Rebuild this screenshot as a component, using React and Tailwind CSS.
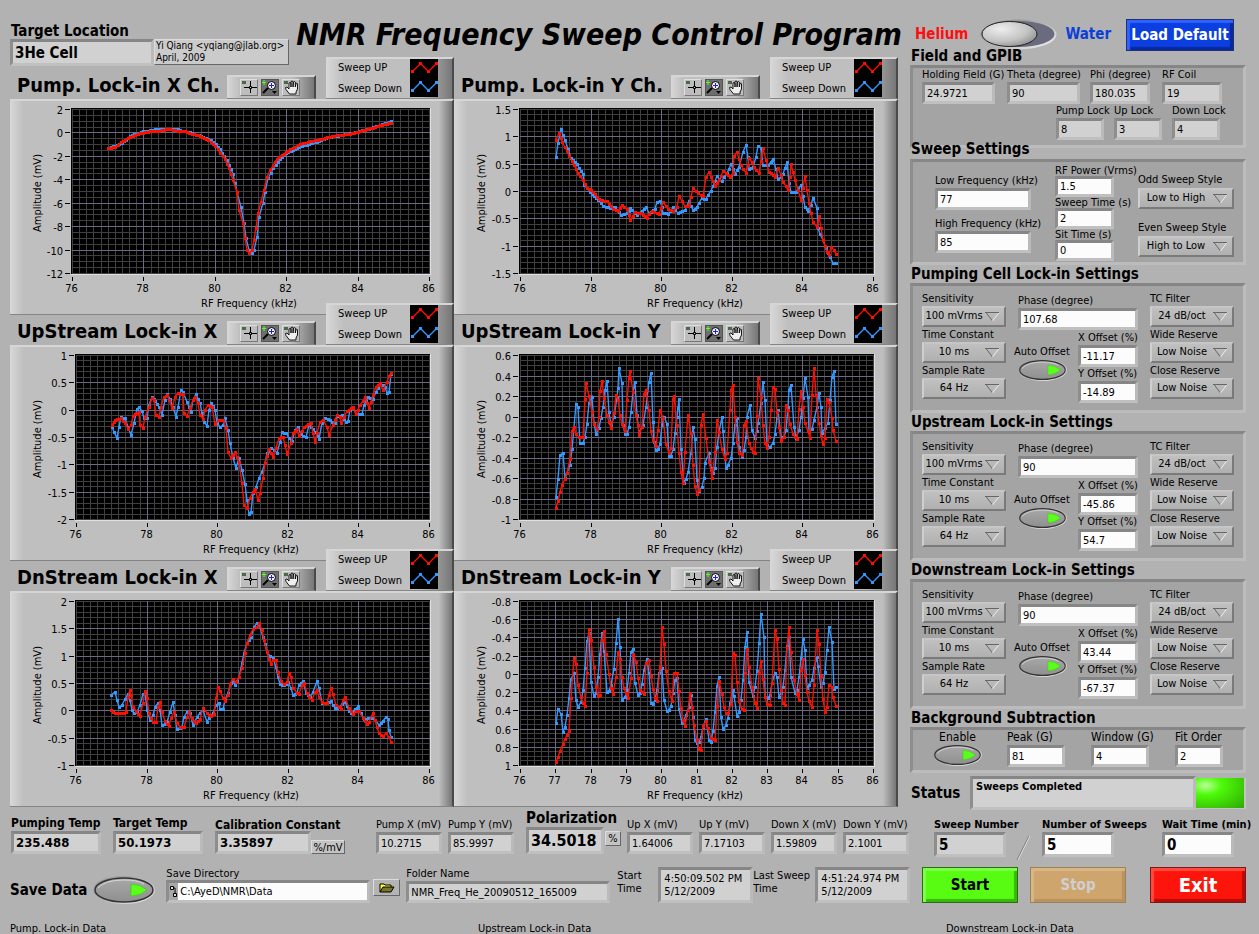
import React from "react";

// Sweep traces, stored as "x,y" vertices on the 3x capture grid of each graph
const TRACES = {
  pumpX: {
    up: "325,414 345,411 362,397 390,380 420,369 450,364 478,362 505,357 530,362 555,363 575,371 600,378 625,391 645,408 660,428 675,447 688,475 700,510 710,545 718,600 728,640 735,685 742,720 748,730 755,720 762,690 768,655 775,610 783,575 792,540 800,500 810,480 825,455 845,435 870,418 900,402 945,390 975,384 1010,376 1050,371 1075,365 1110,355 1140,346 1174,338",
    down: "325,414 365,399 390,378 430,364 480,356 525,356 570,367 610,380 640,395 660,418 680,450 700,492 712,545 722,590 732,640 738,685 747,720 755,730 762,720 770,680 778,620 788,580 795,545 805,505 820,475 840,446 865,425 905,408 950,395 985,382 1050,370 1100,358 1140,345 1174,333",
  },
  pumpY: {
    up: "317,391 326,370 337,397 350,424 365,452 378,478 398,509 412,534 430,545 448,568 470,574 490,597 505,604 516,586 530,598 541,631 556,606 572,610 590,623 605,602 628,612 640,577 655,596 670,604 680,590 688,557 704,588 718,586 730,533 745,550 760,558 767,500 776,487 794,527 808,510 820,484 840,500 850,490 852,437 860,427 872,464 887,488 898,443 912,470 926,490 940,415 956,485 974,500 984,475 1000,515 1013,540 1024,463 1036,510 1052,571 1066,499 1078,580 1090,637 1100,650 1106,617 1120,690 1132,727 1138,735 1144,710 1157,731",
    down: "317,442 332,358 345,390 362,445 380,463 398,493 403,525 420,545 445,570 460,588 480,594 496,590 514,616 530,610 541,593 560,616 576,603 588,592 598,608 616,598 622,577 629,574 640,608 655,611 668,592 684,608 704,600 716,574 728,600 740,592 755,565 767,566 782,543 800,499 815,512 830,490 842,463 855,492 868,470 878,425 887,406 898,476 910,470 925,409 934,415 940,465 955,465 968,448 985,507 1000,492 1012,455 1018,520 1024,545 1038,547 1052,526 1064,590 1075,602 1090,565 1100,595 1104,655 1118,690 1128,715 1140,740 1148,758 1157,758",
  },
  upX: {
    up: "335,344 346,329 364,325 376,338 383,358 392,345 400,317 418,305 421,345 428,355 436,320 446,290 456,265 462,270 468,315 476,322 484,290 492,260 500,256 508,270 516,293 526,262 534,250 548,253 552,310 560,319 570,293 578,270 586,262 594,280 600,315 608,326 616,300 624,286 636,290 646,343 656,330 668,330 678,355 685,425 692,443 706,425 718,455 726,520 733,585 740,593 750,565 758,545 766,537 773,570 780,548 788,505 794,460 806,418 818,442 828,415 838,383 850,380 862,432 872,398 880,370 892,358 898,378 912,350 932,340 944,395 952,370 960,335 970,330 980,350 988,375 998,345 1010,315 1020,322 1024,340 1040,302 1058,292 1068,313 1080,285 1096,262 1108,295 1120,255 1128,230 1140,220 1150,240 1160,215 1168,198 1174,188",
    down: "335,352 343,367 350,383 357,350 364,320 376,325 385,350 394,374 402,340 410,297 416,292 426,303 432,325 442,323 448,285 455,262 466,273 478,290 486,314 494,270 500,251 510,268 518,292 527,320 535,290 542,239 550,245 560,275 572,305 580,270 587,253 600,280 612,335 620,349 627,300 634,278 645,300 652,340 660,350 670,345 674,325 684,360 690,400 700,445 708,473 716,445 726,480 734,523 740,570 747,611 752,605 758,550 768,530 778,505 786,485 796,460 800,430 812,415 822,420 832,430 840,395 846,367 858,370 866,385 877,392 884,360 893,352 902,372 918,382 928,345 940,357 958,386 966,340 976,325 990,329 1004,340 1010,318 1025,316 1038,337 1044,333 1050,300 1060,290 1068,312 1085,313 1092,285 1104,262 1118,267 1128,245 1140,220 1155,230 1162,250 1168,247 1172,193 1174,190",
  },
  upY: {
    up: "317,595 325,572 331,545 337,524 344,508 352,490 359,447 365,364 371,352 378,372 386,382 398,382 404,268 409,220 416,258 425,307 431,341 440,358 446,320 449,244 457,212 463,265 471,315 482,355 491,310 497,254 503,270 509,315 516,343 526,362 532,270 536,204 541,182 549,246 557,315 568,376 577,350 583,252 588,239 596,300 602,362 610,390 618,408 624,360 629,299 638,325 648,402 656,430 663,415 668,268 673,257 682,345 688,428 694,485 700,520 706,427 715,314 722,370 728,466 734,527 742,553 748,540 754,346 760,313 768,385 776,455 787,503 794,425 800,331 808,365 816,418 824,448 832,428 840,300 843,241 848,226 855,320 860,395 866,430 876,434 882,345 888,334 896,400 908,425 914,430 920,318 925,203 932,260 938,345 946,400 952,415 958,382 964,300 968,232 974,236 980,307 992,394 1002,380 1008,284 1014,300 1020,341 1028,372 1040,388 1046,298 1052,242 1060,290 1066,340 1079,385 1086,255 1091,173 1098,255 1106,340 1112,377 1118,401 1124,385 1132,268 1138,275 1145,325 1150,361 1157,394",
    down: "317,562 325,506 331,436 338,428 344,505 352,490 360,465 366,418 371,350 377,283 384,290 390,400 398,400 404,380 410,343 418,280 425,260 431,340 437,373 446,355 453,325 459,292 464,240 470,212 476,305 484,345 492,320 500,260 504,235 508,173 515,220 519,345 524,373 530,371 536,350 542,307 550,245 556,217 562,315 568,370 578,345 588,290 596,217 602,190 608,335 612,395 618,421 624,418 630,402 636,345 642,322 650,343 656,438 662,438 668,418 674,370 680,320 684,295 688,268 694,418 702,520 708,508 715,485 722,430 728,352 734,388 740,510 748,543 756,530 761,505 766,460 776,430 782,475 788,490 796,475 802,410 808,365 815,320 820,362 827,475 834,465 842,445 848,400 854,345 860,325 867,410 875,440 882,420 888,380 892,320 899,286 906,360 914,385 925,340 932,280 940,217 946,270 952,405 960,410 968,398 974,372 980,325 985,300 992,380 1002,380 1008,360 1014,290 1018,240 1024,226 1032,350 1038,385 1046,360 1054,320 1060,265 1066,205 1074,262 1078,365 1086,358 1092,330 1100,290 1106,248 1112,290 1116,370 1126,355 1134,340 1140,270 1145,202 1151,182 1157,341",
  },
  dnX: {
    up: "334,480 345,490 365,490 378,486 384,440 389,419 394,436 400,470 408,484 421,498 428,460 434,424 442,445 448,490 460,516 467,516 474,470 480,457 486,485 494,512 508,529 514,505 521,487 530,520 540,530 553,531 560,500 568,485 576,505 588,518 600,508 610,473 620,490 632,497 642,492 648,445 653,412 660,423 668,445 675,452 684,435 690,402 700,388 708,395 718,380 726,355 734,310 740,278 750,255 760,236 770,230 778,220 785,240 792,270 800,305 806,328 812,343 820,330 828,330 834,365 844,392 852,403 860,395 866,368 873,380 880,415 890,430 898,433 906,405 912,400 920,430 928,440 937,449 944,425 950,420 958,440 966,455 980,460 988,435 992,415 1000,432 1008,465 1024,478 1030,450 1036,440 1046,475 1058,492 1068,482 1078,482 1088,505 1100,522 1108,515 1118,490 1124,510 1130,530 1138,550 1150,557 1157,550 1166,562 1174,577",
    down: "334,436 344,427 352,450 358,472 366,465 376,448 384,432 390,450 396,480 402,490 410,485 420,465 428,432 436,430 442,480 450,510 460,495 466,470 474,460 480,480 487,526 500,515 510,485 520,455 526,495 532,538 545,530 553,500 560,487 570,490 580,526 590,500 600,490 610,480 620,515 628,505 640,490 648,465 656,460 660,478 668,478 676,450 684,430 692,400 698,390 706,406 718,380 726,340 740,280 752,262 762,230 770,220 778,222 788,260 794,282 802,305 810,318 820,323 828,350 834,380 840,403 852,406 864,395 872,415 878,436 890,428 898,405 910,392 918,430 930,440 940,425 950,394 958,415 965,460 980,458 992,452 1004,475 1020,470 1034,455 1046,482 1052,490 1064,478 1075,467 1084,490 1092,506 1104,505 1116,505 1126,510 1136,526 1150,512 1157,500 1163,506 1168,540 1174,562",
  },
  dnY: {
    up: "317,637 325,622 331,602 338,583 345,567 358,544 364,445 371,323 377,343 383,404 392,440 398,460 404,469 410,368 416,236 424,271 431,352 437,410 443,438 449,436 457,271 463,242 469,312 476,373 482,415 490,433 497,380 503,305 509,328 515,380 523,415 535,445 542,385 550,312 557,335 563,385 569,420 582,433 588,338 596,329 602,377 608,418 616,445 622,454 629,350 635,230 641,281 649,362 656,422 666,454 673,370 682,368 688,422 694,473 700,510 706,528 714,480 721,428 727,470 733,526 742,570 748,598 754,601 760,527 767,512 774,535 782,565 794,569 800,468 808,394 815,432 822,470 828,488 834,490 842,462 848,308 854,314 860,395 866,453 875,478 881,481 886,370 892,296 898,352 906,410 914,458 920,475 926,370 932,332 940,388 946,442 952,463 959,466 966,400 974,239 980,266 986,358 992,420 1000,458 1006,466 1012,295 1018,230 1024,305 1032,390 1040,432 1046,451 1052,360 1058,326 1066,375 1072,425 1078,452 1085,472 1091,406 1100,239 1106,282 1112,377 1118,448 1124,485 1132,472 1138,406 1146,410 1150,440 1157,469",
    down: "317,520 325,476 332,493 338,547 344,530 350,496 358,445 364,386 371,370 377,451 383,472 392,455 398,420 404,355 410,274 416,250 424,395 431,439 437,430 443,380 449,311 457,248 463,302 470,427 477,424 484,405 491,358 497,278 503,208 509,290 515,449 524,442 530,420 536,370 542,307 550,296 556,400 563,436 570,430 576,402 583,360 590,326 596,370 602,460 608,463 616,450 622,420 628,370 635,355 641,449 650,484 656,480 662,468 668,430 674,390 681,383 688,478 695,520 702,510 708,495 716,470 722,435 728,500 734,571 742,580 748,575 754,560 760,530 767,508 776,569 782,577 788,542 794,485 800,409 808,382 814,500 820,538 828,525 834,505 840,460 848,420 853,437 860,499 866,487 874,450 880,390 886,292 892,247 898,395 908,439 914,412 920,362 926,278 932,193 941,262 946,440 954,445 960,435 966,400 974,370 980,382 986,442 994,430 1000,410 1006,360 1012,287 1018,260 1024,382 1034,430 1040,420 1046,380 1052,325 1058,266 1066,300 1072,415 1078,405 1085,390 1091,355 1100,320 1105,347 1112,412 1118,400 1124,365 1132,301 1138,230 1145,277 1151,417 1157,412",
  },
};

const EVEN = ["76", "78", "80", "82", "84", "86"];
const ALL = ["76", "77", "78", "79", "80", "81", "82", "83", "84", "85", "86"];

const CHARTS = [
  { id: "pumpX", title: "Pump. Lock-in X Ch.", origin: [30, 267], left: 62, xs: EVEN, xMinor: 10, yMinor: 4, ys: ["2", "0", "-2", "-4", "-6", "-8", "-10", "-12"] },
  { id: "pumpY", title: "Pump. Lock-in Y Ch.", origin: [12, 267], left: 66, xs: EVEN, xMinor: 10, yMinor: 5, ys: ["1.5", "1", "0.5", "0", "-0.5", "-1", "-1.5"] },
  { id: "upX", title: "UpStream Lock-in X", origin: [30, 105], left: 66, xs: EVEN, xMinor: 10, yMinor: 5, ys: ["1", "0.5", "0", "-0.5", "-1", "-1.5", "-2"] },
  { id: "upY", title: "UpStream Lock-in Y", origin: [12, 105], left: 66, xs: EVEN, xMinor: 10, yMinor: 4, ys: ["0.6", "0.4", "0.2", "0", "-0.2", "-0.4", "-0.6", "-0.8", "-1"] },
  { id: "dnX", title: "DnStream Lock-in X", origin: [30, 123], left: 66, xs: EVEN, xMinor: 10, yMinor: 5, ys: ["2", "1.5", "1", "0.5", "0", "-0.5", "-1"] },
  { id: "dnY", title: "DnStream Lock-in Y", origin: [12, 123], left: 66, xs: ALL, xMinor: 5, yMinor: 4, ys: ["-0.8", "-0.6", "-0.4", "-0.2", "0", "0.2", "0.4", "0.6", "0.8", "1"] },
];

const RIGHT = 420;
const TOP = 10;
const BOTTOM = 175;
const RED = "#ff0f00";
const BLUE = "#3399ff";

// turns the vertices into evenly spaced samples, one marker each
const toPoints = (trace, [ox, oy]) => {
  const v = trace.split(" ").map((p) => p.split(",").map(Number));
  const out = [];
  v.forEach(([x, y], i) => {
    if (i > 0) {
      const [px, py] = v[i - 1];
      const n = Math.max(1, Math.round((x - px) / 7));
      for (let k = 1; k < n; k++) out.push([px + ((x - px) * k) / n, py + ((y - py) * k) / n]);
    }
    out.push([x, y]);
  });
  return out.map(([x, y]) => [Math.round((x - ox) / 3), Math.round((y - oy) / 3)]);
};

const Trace = ({ trace, origin, color }) => {
  const pts = toPoints(trace, origin);
  return (
    <g>
      <polyline points={pts.map((p) => p.join(",")).join(" ")} fill="none" stroke={color} strokeWidth="1.4" />
      {pts.map(([x, y], i) => (
        <rect key={i} x={x - 1} y={y - 1} width="3" height="3" fill={color} shapeRendering="crispEdges" />
      ))}
    </g>
  );
};

const lines = (count, from, to) =>
  Array.from({ length: count + 1 }, (_, i) => Math.round(from + ((to - from) * i) / count) + 0.5);

const Plot = ({ id, origin, left, xs, ys, xMinor, yMinor }) => {
  const xMajor = lines(xs.length - 1, left, RIGHT - 1);
  const yMajor = lines(ys.length - 1, TOP, BOTTOM - 1);
  return (
    <svg viewBox="0 0 444 216" className="block w-full text-[11px]" role="img" aria-label="Amplitude against RF frequency">
      <rect x={left - 1} y={TOP - 1} width={RIGHT - left + 2} height={BOTTOM - TOP + 2} fill="#e0e0e0" />
      <rect x={left - 1} y={TOP - 1} width={RIGHT - left + 1} height={BOTTOM - TOP + 1} fill="#000" />
      <g stroke="#404040">
        {lines((xs.length - 1) * xMinor, left, RIGHT - 1).map((x) => (
          <path key={x} d={`M${x} ${TOP}V${BOTTOM}`} />
        ))}
        {lines((ys.length - 1) * yMinor, TOP, BOTTOM - 1).map((y) => (
          <path key={y} d={`M${left} ${y}H${RIGHT}`} />
        ))}
      </g>
      <g stroke="#6a6a84">
        {xMajor.slice(1, -1).map((x) => <path key={x} d={`M${x} ${TOP}V${BOTTOM}`} />)}
        {yMajor.slice(1, -1).map((y) => <path key={y} d={`M${left} ${y}H${RIGHT}`} />)}
      </g>
      <g stroke="#000">
        {xMajor.map((x) => <path key={x} d={`M${x} 178v4`} />)}
        {yMajor.map((y) => <path key={y} d={`M${left - 7} ${y}h5`} />)}
      </g>
      <g textAnchor="middle">
        {xs.map((t, i) => <text key={t} x={xMajor[i] - 1} y="193">{t}</text>)}
        <text x={(left + RIGHT) / 2 - 2} y="208">RF Frequency (kHz)</text>
        <text transform="translate(31 94) rotate(-90)">Amplitude (mV)</text>
      </g>
      <g textAnchor="end">
        {ys.map((t, i) => <text key={t} x={left - 9} y={yMajor[i] + 4}>{t}</text>)}
      </g>
      <Trace trace={TRACES[id].down} origin={origin} color={BLUE} />
      <Trace trace={TRACES[id].up} origin={origin} color={RED} />
    </svg>
  );
};

const LegendMark = ({ color }) => (
  <svg width="28" height="19" viewBox="0 0 28 19" className="block bg-black" fill={color}>
    <path d="M2.5 12.5l8-8 8 8 8-8" fill="none" stroke={color} strokeWidth="1.3" />
    <path d="M1 11h3v3H1zM9 3h3v3H9zM17 11h3v3h-3zM25 3h3v3h-3z" />
  </svg>
);

const ToolButton = ({ label, active, children }) => (
  <button
    type="button"
    aria-label={label}
    className={
      active
        ? "h-[17px] w-[18px] border border-[#555] bg-[#6e6e6e]"
        : "h-[17px] w-[18px] border border-t-[#e0e0e0] border-l-[#e0e0e0] border-r-[#777] border-b-[#777] bg-[#bdbdbd]"
    }
  >
    <svg width="16" height="15" viewBox="0 0 16 15" className="block" fill="none" stroke="#000">
      {children}
    </svg>
  </button>
);

const EDGE = "border-t-2 border-r-2 border-b border-t-[#d6d6d6] border-r-[#4a4a4a] border-b-[#858585]";
const PALETTE = `${EDGE} bg-[linear-gradient(90deg,#d8d8d8,#bfbfbf_14%,#bfbfbf_74%,#777777)]`;

const Chart = ({ title, ...plot }) => (
  <figure className="-mt-3">
    <figcaption className="flex h-[42px] items-end">
      <h2 className="flex-1 pl-[7px] text-[20px] leading-[28px] font-bold whitespace-nowrap">{title}</h2>
      <div className={`mr-[10px] flex h-6 w-[89px] gap-[3px] pt-[2px] pl-[13px] ${PALETTE}`}>
        <ToolButton label="Cursor">
          <path d="M9.5 1v12M3 7.5h13" />
          <path d="M8.5 6.500h2v2h-2z" fill="#bdbdbd" />
          <path d="M1 1h4v3H1z" fill="#4a6a4a" stroke="none" />
        </ToolButton>
        <ToolButton label="Zoom" active>
          <path d="M1 13l5-5" strokeWidth="2" />
          <circle cx="9.5" cy="5.5" r="4" fill="#eeeeff" />
          <path d="M7 5.5h5M9.5 3v5" stroke="#2222cc" />
          <path d="M2 0v5M0 2.5h4" stroke="#55ff22" />
          <path d="M10 11h5l-2.5 3z" fill="#000" stroke="none" />
        </ToolButton>
        <ToolButton label="Pan">
          <path d="M1 1h4v3H1z" fill="#4a6a4a" stroke="none" />
          <path
            d="M6.5 14L3 9.5 2.5 7.5 4 7l2 2V3l1-.5L8 3v4V1.5L9 1l1 .5V7l.5-5 1-.5.8.5v5l.7-3.5.8-.3.7.5V9l-1.5 3v2z"
            fill="#eee"
            strokeWidth=".9"
          />
        </ToolButton>
      </div>
      <div className={`flex h-[42px] w-[128px] justify-between pr-[14px] pl-3 ${PALETTE}`}>
        <div className="-mt-[2px] text-[11px] leading-[21px]">
          <p>Sweep UP</p>
          <p>Sweep Down</p>
        </div>
        <div className="h-[38px] bg-black">
          <LegendMark color={RED} />
          <LegendMark color={BLUE} />
        </div>
      </div>
    </figcaption>
    <div className={`bg-[linear-gradient(90deg,#d8d8d8,#bfbfbf_3%,#bfbfbf_97%,#777777)] ${EDGE}`}>
      <div className="-mt-[2px] -mr-[2px] -mb-px">
        <Plot {...plot} />
      </div>
    </div>
  </figure>
);

const SUNKEN = "border-[3px] border-t-[#868686] border-l-[#8e8e8e] border-r-[#bababa] border-b-[#c0c0c0]";
const RAISED = "border border-t-[#dddddd] border-l-[#dddddd] border-r-[#666666] border-b-[#666666]";

const Field = ({ label, value, className, edit, labelClass = "text-[11px] leading-[14px]", inputClass = "h-[22px] text-[11px]" }) => (
  <label className={`block shrink-0 ${className}`}>
    <span className={`block whitespace-nowrap ${labelClass}`}>{label}</span>
    <input
      defaultValue={value}
      readOnly={!edit}
      className={`block w-full pl-[2px] outline-none ${SUNKEN} ${inputClass} ${edit ? "bg-[#fcfcfc]" : "bg-[#d1d1d1]"}`}
    />
  </label>
);

const Select = ({ label, value, labelClass = "leading-[15px]" }) => (
  <label className="relative block text-[11px]">
    <span className={`block whitespace-nowrap ${labelClass}`}>{label}</span>
    <select
      defaultValue={value}
      className="block h-[21px] w-full appearance-none border-2 border-t-[#c6c6c6] border-l-[#cfcfcf] border-r-[#7a7a7a] border-b-[#7a7a7a] bg-linear-to-b from-[#c0c0c0] to-[#b0b0b0] pr-[20px] text-center [text-align-last:center] outline-none"
    >
      <option>{value}</option>
    </select>
    <svg width="15" height="10" viewBox="0 0 15 10" className="absolute right-[6px] bottom-[5px]" fill="none">
      <path d="M1 .5L7.5 9" stroke="#666" />
      <path d="M14 .5L7.5 9" stroke="#eee" />
      <path d="M0 .5H14" stroke="#666" />
    </svg>
  </label>
);

const OvalSwitch = ({ className }) => (
  <button type="button" aria-pressed="true" className={`block ${className}`}>
    <svg viewBox="0 0 62 28" className="block h-full w-full">
      <defs>
        <linearGradient id="ovalFace" x1="0" y1="0" x2="0" y2="1">
          <stop offset="0" stopColor="#a8a8a8" />
          <stop offset="1" stopColor="#8f8f8f" />
        </linearGradient>
        <linearGradient id="ovalRim" x1="0" y1="0" x2="1" y2="1">
          <stop offset="0" stopColor="#8a8a8a" />
          <stop offset=".5" stopColor="#b8b8b8" />
          <stop offset="1" stopColor="#f2f2f2" />
        </linearGradient>
      </defs>
      <ellipse cx="31" cy="14" rx="31" ry="14" fill="url(#ovalRim)" />
      <ellipse cx="31" cy="14" rx="29" ry="12" fill="url(#ovalFace)" stroke="#333" strokeWidth="1.5" />
      <path d="M5 12Q12 4 31 4q14 0 20 4" fill="none" stroke="#d8d8d8" />
      <path d="M38 8q9 0 16 6-7 6-16 6z" fill="#5bff1c" stroke="#43c512" strokeWidth=".7" />
    </svg>
  </button>
);

const Panel = ({ title, titleClass = "", className, children }) => (
  <section>
    <h3 className={`pl-px text-[15px] leading-[18px] font-bold whitespace-nowrap ${titleClass}`}>{title}</h3>
    <div className={`mr-[13px] border-[3px] border-t-[#868686] border-l-[#8e8e8e] border-r-[#bcbcbc] border-b-[#bcbcbc] bg-[#a4a4a4] ${className}`}>
      {children}
    </div>
  </section>
);

const LockIn = ({ title, phase, x, y }) => (
  <Panel title={title} className="flex h-[130px] pl-[9px]">
    <div className="w-[84px] pt-[5px]">
      <Select label="Sensitivity" value="100 mVrms" />
      <Select label="Time Constant" value="10 ms" />
      <Select label="Sample Rate" value="64 Hz" />
    </div>
    <div className="ml-2 w-[124px] pt-2">
      <Field label="Phase (degree)" value={phase} edit className="ml-1" />
      <div className="flex justify-between pt-px">
        <label className="block pt-[14px] text-[11px] leading-[14px] whitespace-nowrap">
          Auto Offset
          <OvalSwitch className="ml-[3px] h-[22px] w-[51px]" />
        </label>
        <div className="w-[60px]">
          <Field label="X Offset (%)" value={x} edit className="" />
          <Field label="Y Offset (%)" value={y} edit className="" />
        </div>
      </div>
    </div>
    <div className="ml-3 w-[84px] pt-[5px]">
      <Select label="TC Filter" value="24 dB/oct" />
      <Select label="Wide Reserve" value="Low Noise" />
      <Select label="Close Reserve" value="Low Noise" />
    </div>
  </Panel>
);

const TimeStamp = ({ label, value, className }) => (
  <label className={`flex shrink-0 justify-between text-[11px] leading-[13px] ${className}`}>
    <span className="pt-[2px]">{label}</span>
    <textarea
      readOnly
      rows={2}
      defaultValue={value}
      className={`block h-9 w-[95px] resize-none overflow-hidden bg-[#d1d1d1] pt-[2px] pl-[3px] whitespace-pre outline-none ${SUNKEN}`}
    />
  </label>
);

const BOLD_LABEL = "text-[12px] leading-[16px] font-bold";
const BOLD_INPUT = "h-[23px] text-[13px] font-bold";
const SWEEP_LABEL = "text-[11px] leading-[15px] font-bold";
const SWEEP_INPUT = "h-[25px] text-[15px] font-bold";
const TIGHT_LABEL = "text-[11px] leading-[11px]";
const TIGHT_INPUT = "h-[21px] text-[11px]";

export default function App() {
  return (
    <div className="h-screen overflow-hidden bg-[#b2b2b2] font-['DejaVu_Sans_Condensed','DejaVu_Sans',sans-serif] text-black">
      <main className="flex">
        {/* Graphs and readouts */}
        <div className="min-w-0 flex-1 pl-[10px]">
          <header className="flex h-[69px] pt-[23px] pr-2">
            <Field
              label="Target Location"
              value="3He Cell"
              className="w-[144px]"
              labelClass="text-[15px] leading-[16px] font-bold pl-px"
              inputClass="h-[27px] text-[15px] font-bold"
            />
            <p className={`mt-4 h-[26px] w-[135px] shrink-0 bg-[#cbcbcb] pl-px text-[10px] leading-[12px] whitespace-nowrap ${RAISED}`}>
              Yi Qiang &lt;yqiang@jlab.org&gt;
              <br />
              April, 2009
            </p>
            <h1 className="-mt-2 flex-1 text-right text-[30px] leading-[40px] font-bold whitespace-nowrap italic">
              NMR Frequency Sweep Control Program
            </h1>
          </header>

          <div className="grid grid-cols-2 pr-3">
            {CHARTS.map((c) => (
              <Chart key={c.id} {...c} />
            ))}
          </div>

          <div className="flex h-[47px] items-end pl-px">
            <Field label="Pumping Temp" value="235.488" className="w-[90px]" labelClass={BOLD_LABEL} inputClass={BOLD_INPUT} />
            <Field label="Target Temp" value="50.1973" className="ml-3 w-[90px]" labelClass={BOLD_LABEL} inputClass={BOLD_INPUT} />
            <Field
              label="Calibration Constant"
              value="3.35897"
              className="ml-3 w-24"
              labelClass="text-[12px] leading-[12px] font-bold"
              inputClass={BOLD_INPUT}
            />
            <span className={`mr-[31px] h-[14px] w-[34px] bg-[#c4c4c4] text-center text-[11px] leading-[13px] ${RAISED}`}>%/mV</span>
            <Field label="Pump X (mV)" value="10.2715" className="w-[66px]" />
            <Field label="Pump Y (mV)" value="85.9997" className="ml-[6px] w-[66px]" />
            <Field
              label="Polarization"
              value="34.5018"
              className="ml-3 w-[78px]"
              labelClass="text-[15px] leading-[18px] font-bold"
              inputClass="h-[27px] text-[16px] font-bold"
            />
            <span className={`mb-2 ml-px h-[15px] w-4 bg-[#c4c4c4] text-center text-[11px] leading-[13px] ${RAISED}`}>%</span>
            <Field label="Up X (mV)" value="1.64006" className="ml-[6px] w-[66px]" />
            <Field label="Up Y (mV)" value="7.17103" className="ml-[6px] w-[66px]" />
            <Field label="Down X (mV)" value="1.59809" className="ml-[6px] w-[66px]" />
            <Field label="Down Y (mV)" value="2.1001" className="ml-[6px] w-[66px]" />
          </div>

          <div className="mt-[13px] flex h-9">
            <label className="flex items-center gap-[6px] pt-[10px] text-[15px] font-bold whitespace-nowrap">
              Save Data
              <OvalSwitch className="h-7 w-[62px]" />
            </label>
            <div className="ml-[11px] w-[204px] shrink-0 text-[11px] leading-[13px]">
              <label htmlFor="saveDir" className="block">Save Directory</label>
              <div className={`flex h-[23px] bg-[#a8a8a8] ${SUNKEN}`}>
                <svg width="9" height="17" viewBox="0 0 9 17" className="shrink-0" fill="#ddd" stroke="#000">
                  <path d="M1.5 3.5h3v3h-3zM4.5 10.5h3v3h-3zM4.5 5H6v5.5" />
                </svg>
                <input id="saveDir" defaultValue="C:\AyeD\NMR\Data" className="min-w-0 flex-1 bg-[#fcfcfc] pl-[2px] text-[11px] outline-none" />
              </div>
            </div>
            <button
              type="button"
              aria-label="Browse"
              className={`mt-3 ml-[3px] flex h-[17px] w-[27px] shrink-0 items-center justify-center bg-[#b4b4b4] ${RAISED}`}
            >
              <svg width="16" height="11" viewBox="0 0 16 11" className="block">
                <path d="M1 10V2h4l1 1h6v2" fill="#ffff33" stroke="#000" />
                <path d="M1 10l3-5h11l-3 5z" fill="#77772a" stroke="#000" />
              </svg>
            </button>
            <Field label="Folder Name" value="NMR_Freq_He_20090512_165009" className="ml-[6px] w-[204px]" />
            <TimeStamp label={<>Start<br />Time</>} value={"4:50:09.502 PM\n5/12/2009"} className="ml-[7px] w-[136px]" />
            <TimeStamp label={<>Last Sweep<br />Time</>} value={"4:51:24.974 PM\n5/12/2009"} className="w-[157px]" />
          </div>
        </div>

        {/* Settings */}
        <div className="w-[349px] shrink-0">
          <div className="flex h-[47px] items-start pt-[19px] pl-[5px] text-[15px] leading-[30px] font-bold">
            <span className="text-[#fe0f0f]">Helium</span>
            <button type="button" role="switch" aria-checked="false" aria-label="Helium or water" className="ml-3 block h-[31px] w-[77px] shrink-0">
              <svg viewBox="0 0 77 31" className="block">
                <defs>
                  <linearGradient id="switchRim" x1="0" y1="0" x2="1" y2="1">
                    <stop offset="0" stopColor="#777" />
                    <stop offset=".5" stopColor="#b8b8b8" />
                    <stop offset="1" stopColor="#f5f5f5" />
                  </linearGradient>
                  <radialGradient id="knob" cx=".35" cy=".3" r=".8">
                    <stop offset="0" stopColor="#eee" />
                    <stop offset=".6" stopColor="#c4c4c4" />
                    <stop offset="1" stopColor="#8a8a8a" />
                  </radialGradient>
                </defs>
                <ellipse cx="38.5" cy="15.5" rx="38" ry="15" fill="url(#switchRim)" />
                <ellipse cx="38.5" cy="15" rx="36" ry="13" fill="#6b6b80" />
                <ellipse cx="29.5" cy="15" rx="27.5" ry="12.5" fill="url(#knob)" stroke="#222" />
              </svg>
            </button>
            <span className="ml-2 text-[#0c3fd8]">Water</span>
            <button
              type="button"
              className="mr-[25px] ml-auto h-8 w-[108px] shrink-0 border border-[#20306e] bg-[#0c3fe0] text-[15px] leading-[30px] font-bold whitespace-nowrap text-white shadow-[inset_3px_3px_1px_#2f62ff,inset_-3px_-3px_1px_#0828a0]"
            >
              Load Default
            </button>
          </div>

          <Panel title="Field and GPIB" className="h-[83px]">
            <div className="flex pl-[9px]">
              <Field label="Holding Field (G)" value="24.9721" className="w-[73px]" />
              <Field label="Theta (degree)" value="90" className="ml-3 w-[73px]" />
              <Field label="Phi (degree)" value="180.035" className="ml-[10px] w-[60px]" />
              <Field label="RF Coil" value="19" className="ml-3 w-[60px]" />
            </div>
            <div className="flex gap-[10px] pl-[143px]">
              <Field label="Pump Lock" value="8" className="w-12" />
              <Field label="Up Lock" value="3" className="w-12" />
              <Field label="Down Lock" value="4" className="w-12" />
            </div>
          </Panel>

          <Panel title="Sweep Settings" titleClass="-mt-2 mb-px" className="flex h-[106px] pl-[22px]">
            <div className="flex w-24 flex-col gap-[7px] pt-3">
              <Field label="Low Frequency (kHz)" value="77" edit className="" />
              <Field label="High Frequency (kHz)" value="85" edit className="" />
            </div>
            <div className="ml-6 w-[59px] pt-[3px]">
              <Field label="RF Power (Vrms)" value="1.5" edit className="" labelClass={TIGHT_LABEL} inputClass={TIGHT_INPUT} />
              <Field label="Sweep Time (s)" value="2" edit className="" labelClass={TIGHT_LABEL} inputClass={TIGHT_INPUT} />
              <Field label="Sit Time (s)" value="0" edit className="" labelClass={TIGHT_LABEL} inputClass={TIGHT_INPUT} />
            </div>
            <div className="ml-6 flex w-24 flex-col gap-[11px] pt-[10px]">
              <Select label="Odd Sweep Style" value="Low to High" labelClass="leading-[16px]" />
              <Select label="Even Sweep Style" value="High to Low" labelClass="leading-[16px]" />
            </div>
          </Panel>

          <LockIn title="Pumping Cell Lock-in Settings" phase="107.68" x="-11.17" y="-14.89" />
          <LockIn title="Upstream Lock-in Settings" phase="90" x="-45.86" y="54.7" />
          <LockIn title="Downstream Lock-in Settings" phase="90" x="43.44" y="-67.37" />

          <Panel title="Background Subtraction" className="flex h-[46px] pl-[19px]">
            <label className="block w-[51px] pt-px text-center text-[12px] leading-[13px]">
              Enable
              <OvalSwitch className="h-[22px] w-[51px]" />
            </label>
            <Field label="Peak (G)" value="81" edit className="ml-6 w-[58px]" labelClass="text-[12px] leading-[15px]" />
            <Field label="Window (G)" value="4" edit className="ml-[26px] w-[58px]" labelClass="text-[12px] leading-[15px]" />
            <Field label="Fit Order" value="2" edit className="ml-[26px] w-12" labelClass="text-[12px] leading-[15px]" />
          </Panel>

          <div className="mt-[3px] flex h-[34px] items-center pl-px">
            <label htmlFor="status" className="w-[59px] text-[15px] font-bold">Status</label>
            <textarea
              id="status"
              readOnly
              defaultValue="Sweeps Completed"
              className={`h-[34px] w-[226px] resize-none overflow-hidden bg-[#d1d1d1] pl-[3px] text-[11px] leading-[16px] font-bold outline-none ${SUNKEN}`}
            />
            <div className="h-[31px] w-[50px] border-r-2 border-b border-[#c4c4c4] bg-radial-[at_20%_25%] from-[#b8ff98] via-[#4dfa08] via-30% to-[#2fa804]" />
          </div>

          <div className="mt-[7px] flex pl-6">
            <Field label="Sweep Number" value="5" className="w-[72px]" labelClass={SWEEP_LABEL} inputClass={SWEEP_INPUT} />
            <svg width="16" height="26" viewBox="0 0 16 26" className="mx-[10px] mt-[18px] shrink-0">
              <path d="M1 25L13 1" stroke="#777" />
              <path d="M2 25L14 1" stroke="#ddd" />
            </svg>
            <Field label="Number of Sweeps" value="5" edit className="w-[72px]" labelClass={SWEEP_LABEL} inputClass={SWEEP_INPUT} />
            <Field label="Wait Time (min)" value="0" edit className="ml-12 w-[72px]" labelClass={SWEEP_LABEL} inputClass={SWEEP_INPUT} />
          </div>

          <div className="mt-[6px] mr-[13px] flex h-9 gap-3 pl-3 font-bold">
            <button type="button" className="w-24 border border-[#2f6a14] bg-[#57fc12] text-[15px] shadow-[inset_3px_3px_1px_#7dff4a,inset_-3px_-3px_1px_#38b80c]">
              Start
            </button>
            <button type="button" disabled className="w-24 border border-[#9c8258] bg-[#cfa56e] text-[15px] text-[#cfcfcf] shadow-[inset_3px_3px_1px_#d9b685,inset_-3px_-3px_1px_#b99260]">
              Stop
            </button>
            <button type="button" className="ml-auto w-24 border border-[#7a1a1a] bg-[#fd150c] text-[20px] text-white shadow-[inset_3px_3px_1px_#ff4a40,inset_-3px_-3px_1px_#b80a06]">
              Exit
            </button>
          </div>
        </div>
      </main>

      <footer className="flex pt-[19px] pl-[10px] text-[11px] leading-[14px]">
        <p className="w-[468px] shrink-0">Pump. Lock-in Data</p>
        <p className="w-[468px] shrink-0">Upstream Lock-in Data</p>
        <p className="w-[468px] shrink-0">Downstream Lock-in Data</p>
      </footer>
    </div>
  );
}
